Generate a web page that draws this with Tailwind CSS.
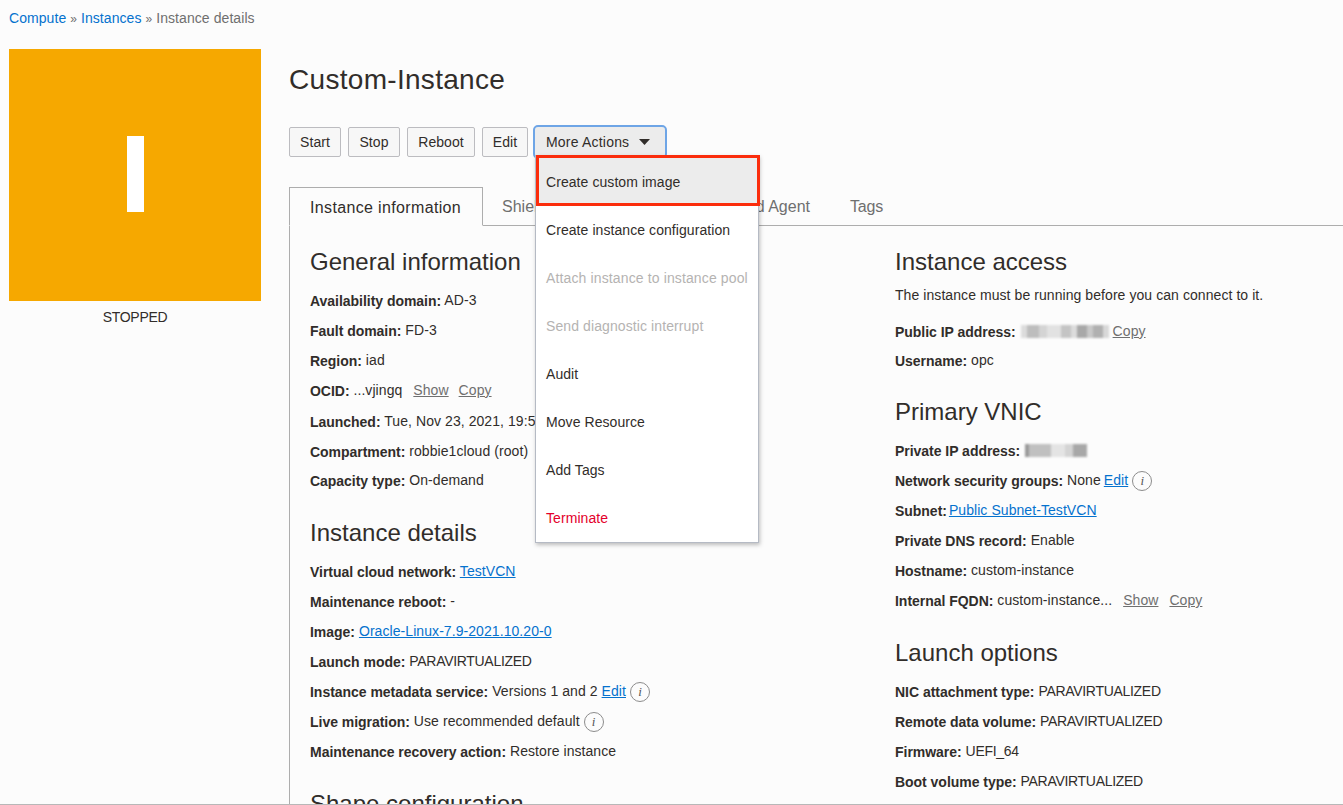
<!DOCTYPE html>
<html lang="en">
  <head>
    <meta charset="UTF-8" />
    <meta name="viewport" content="width=device-width, initial-scale=1.0" />
    <title>Instance details</title>
    <script src="https://cdn.jsdelivr.net/npm/@tailwindcss/browser@4"></script>
  </head>
  <body class="m-0 p-0 bg-[#fcfcfc] font-['Liberation_Sans',Arial,sans-serif] text-[14px] tracking-[0.07px] text-[#312d2a] [&_b]:tracking-[-0.03px] [&_b]:relative [&_b]:top-[1px]">
    <div class="h-[805px] overflow-hidden border-b border-[#b8b8b8] relative">
      <!-- breadcrumb -->
      <div class="h-[49px] pl-[9px] pt-[10px] leading-[16px] text-[#6f6f6f]">
        <a class="text-[#0572ce]">Compute</a> <span class="text-[12px]">»</span>
        <a class="text-[#0572ce]">Instances</a> <span class="text-[12px]">»</span>
        Instance details
      </div>

      <div class="flex pl-[9px]">
        <!-- status tile -->
        <div class="w-[252px] shrink-0">
          <div class="h-[252px] bg-[#f6a800] flex items-center justify-center">
            <div class="w-[17px] h-[76px] bg-white -mt-[2px]"></div>
          </div>
          <div class="text-center mt-[8px] leading-[16px] tracking-[-0.3px]">STOPPED</div>
        </div>

        <div class="ml-[28px] flex-1 min-w-0">
          <h1 class="text-[28px] tracking-[0.3px] leading-[30px] mt-[16px] h-[62px] text-[#312d2a]">Custom-Instance</h1>

          <!-- action buttons -->
          <div class="flex gap-[7px] h-[30px] relative">
            <button class="h-[30px] w-[52px] border border-[#bcbcc0] rounded-[2px] bg-[#f7f7f7]">Start</button>
            <button class="h-[30px] w-[52px] border border-[#bcbcc0] rounded-[2px] bg-[#f7f7f7]">Stop</button>
            <button class="h-[30px] w-[68px] border border-[#bcbcc0] rounded-[2px] bg-[#f7f7f7]">Reboot</button>
            <button class="h-[30px] w-[46px] border border-[#bcbcc0] rounded-[2px] bg-[#f7f7f7]">Edit</button>
            <button class="h-[30px] w-[130px] pl-[11px] flex items-center gap-[10px] rounded-[3px] bg-[#ececec] tracking-[0.2px] outline-2 outline-[#6ea5e6]">
              More Actions
              <svg width="11" height="6" viewBox="0 0 11 6"><path d="M0 0h11L5.500 6z" fill="#312d2a" /></svg>
            </button>

            <!-- dropdown -->
            <div class="absolute left-[246px] top-[28px] w-[224px] z-10 bg-white border border-[#b5bac4] shadow-[1px_2px_4px_rgba(0,0,0,0.25)]">
              <div class="h-[50px] flex items-center pl-[10px] pt-[2px] bg-[#ececec] relative">
                Create custom image
                <div class="absolute -top-[1px] left-0 -right-[2px] h-[51px] border-[3px] border-[#fb2d0c]"></div>
              </div>
              <div class="h-[48px] flex items-center pl-[10px]">Create instance configuration</div>
              <div class="h-[48px] flex items-center pl-[10px] text-[#b5b3b2] tracking-[0.13px]">Attach instance to instance pool</div>
              <div class="h-[48px] flex items-center pl-[10px] text-[#b5b3b2] tracking-[0.1px]">Send diagnostic interrupt</div>
              <div class="h-[48px] flex items-center pl-[10px]">Audit</div>
              <div class="h-[48px] flex items-center pl-[10px]">Move Resource</div>
              <div class="h-[48px] flex items-center pl-[10px]">Add Tags</div>
              <div class="h-[48px] flex items-center pl-[10px] text-[#e4002b]">Terminate</div>
            </div>
          </div>

          <!-- tabs -->
          <div class="flex mt-[30px] h-[39px] border-b border-[#adadad] text-[16px] tracking-normal text-[#6f6f6f]">
            <div class="w-[194px] h-[39px] pl-[20px] pt-[8px] border border-b-[#fcfcfc] border-[#adadad] text-[#312d2a] bg-[#fcfcfc] tracking-[0.35px]">Instance information</div>
            <div class="pl-[19px] pt-[8px]">Shielded Instance</div>
            <div class="ml-auto flex mr-[460px]">
              <div class="pt-[8px] whitespace-nowrap">Oracle Cloud Agent</div>
              <div class="pl-[40px] pt-[8px] tracking-[-0.2px]">Tags</div>
            </div>
          </div>

          <!-- panel -->
          <div class="border-l border-[#adadad] pl-[20px] grid grid-cols-[585px_1fr] h-[600px]">
            <div>
              <h2 class="text-[24px] tracking-normal leading-[28px] mt-[22px] mb-[10px]">General information</h2>
              <div class="h-[30px] leading-[28px]"><b>Availability domain:</b> AD-3</div>
              <div class="h-[30px] leading-[28px]"><b>Fault domain:</b> FD-3</div>
              <div class="h-[30px] leading-[28px]"><b>Region:</b> iad</div>
              <div class="h-[30px] leading-[28px]"><b>OCID:</b> ...vjingq <a class="underline text-[#6f6f6f] ml-[7px]">Show</a> <a class="underline text-[#6f6f6f] ml-[6px]">Copy</a></div>
              <div class="h-[30px] leading-[30px]"><b>Launched:</b> Tue, Nov 23, 2021, 19:53:21 UTC</div>
              <div class="h-[30px] leading-[30px]"><b>Compartment:</b> robbie1cloud (root)</div>
              <div class="h-[30px] leading-[28px]"><b>Capacity type:</b> On-demand</div>

              <h2 class="text-[24px] tracking-normal leading-[28px] mt-[23px] mb-[10px]">Instance details</h2>
              <div class="h-[30px] leading-[28px]"><b>Virtual cloud network:</b> <a class="underline text-[#0572ce]">TestVCN</a></div>
              <div class="h-[30px] leading-[28px]"><b>Maintenance reboot:</b> -</div>
              <div class="h-[30px] leading-[28px]"><b>Image:</b> <a class="underline text-[#0572ce]">Oracle-Linux-7.9-2021.10.20-0</a></div>
              <div class="h-[30px] leading-[28px]"><b>Launch mode:</b> <span class="tracking-[-0.3px]">PARAVIRTUALIZED</span></div>
              <div class="h-[30px] flex items-center gap-[4px]"><span class="-mt-[2px]"><b>Instance metadata service:</b> Versions 1 and 2</span> <a class="underline text-[#0572ce] -mt-[2px]">Edit</a>
                <span class="size-[20px] rounded-full border border-[#8c8c8c] flex items-center justify-center font-['Liberation_Serif',serif] italic text-[13px] text-[#555]">i</span>
              </div>
              <div class="h-[30px] flex items-center gap-[4px]"><span class="-mt-[2px]"><b>Live migration:</b> Use recommended default</span>
                <span class="size-[20px] rounded-full border border-[#8c8c8c] flex items-center justify-center font-['Liberation_Serif',serif] italic text-[13px] text-[#555]">i</span>
              </div>
              <div class="h-[30px] leading-[28px]"><b>Maintenance recovery action:</b> Restore instance</div>

              <h2 class="text-[24px] tracking-normal leading-[28px] mt-[23px]">Shape configuration</h2>
            </div>

            <div>
              <h2 class="text-[24px] tracking-normal leading-[28px] mt-[22px] mb-[11px]">Instance access</h2>
              <div class="leading-[16px] h-[29px]">The instance must be running before you can connect to it.</div>
              <div class="h-[30px] flex items-center"><b>Public IP address:</b>
                <span class="ml-[5px] flex h-[13px] w-[88px] blur-[1px] overflow-hidden">
                  <span class="w-[6px] bg-[#dcdcdc]"></span><span class="w-[12px] bg-[#bdbdbd]"></span><span class="w-[8px] bg-[#d4d4d4]"></span><span class="w-[14px] bg-[#e2e2e2]"></span><span class="w-[10px] bg-[#c4c4c4]"></span><span class="w-[6px] bg-[#dcdcdc]"></span><span class="w-[10px] bg-[#a8a8a8]"></span><span class="w-[6px] bg-[#c8c8c8]"></span><span class="w-[10px] bg-[#b0b0b0]"></span><span class="w-[6px] bg-[#d8d8d8]"></span>
                </span>
                <a class="ml-[4px] underline text-[#6f6f6f]">Copy</a>
              </div>
              <div class="h-[30px] leading-[28px]"><b>Username:</b> opc</div>

              <h2 class="text-[24px] tracking-normal leading-[28px] mt-[22px] mb-[9px]">Primary VNIC</h2>
              <div class="h-[31px] flex items-center"><b>Private IP address:</b>
                <span class="ml-[5px] flex h-[13px] w-[66px] blur-[1px] overflow-hidden">
                  <span class="w-[4px] bg-[#999]"></span><span class="w-[22px] bg-[#c0c0c0]"></span><span class="w-[14px] bg-[#e4e4e4]"></span><span class="w-[8px] bg-[#d4d4d4]"></span><span class="w-[14px] bg-[#a8a8a8]"></span>
                </span>
              </div>
              <div class="h-[30px] flex items-center gap-[3px]"><span class="-mt-[2px]"><b>Network security groups:</b> None</span> <a class="underline text-[#0572ce] -mt-[2px]">Edit</a>
                <span class="ml-[1px] size-[20px] rounded-full border border-[#8c8c8c] flex items-center justify-center font-['Liberation_Serif',serif] italic text-[13px] text-[#555]">i</span>
              </div>
              <div class="h-[30px] leading-[29px]"><b>Subnet:</b> <a class="underline text-[#0572ce] -ml-[2px]">Public Subnet-TestVCN</a></div>
              <div class="h-[30px] leading-[29px]"><b>Private DNS record:</b> Enable</div>
              <div class="h-[30px] leading-[29px]"><b>Hostname:</b> custom-instance</div>
              <div class="h-[30px] leading-[28px]"><b>Internal FQDN:</b> custom-instance... <a class="underline text-[#6f6f6f] ml-[7px]">Show</a> <a class="underline text-[#6f6f6f] ml-[7px]">Copy</a></div>

              <h2 class="text-[24px] tracking-normal leading-[28px] mt-[23px] mb-[10px]">Launch options</h2>
              <div class="h-[30px] leading-[28px]"><b>NIC attachment type:</b> <span class="tracking-[-0.3px]">PARAVIRTUALIZED</span></div>
              <div class="h-[30px] leading-[28px]"><b>Remote data volume:</b> <span class="tracking-[-0.3px]">PARAVIRTUALIZED</span></div>
              <div class="h-[30px] leading-[28px]"><b>Firmware:</b> <span class="tracking-[-0.3px]">UEFI_64</span></div>
              <div class="h-[30px] leading-[28px]"><b>Boot volume type:</b> <span class="tracking-[-0.3px]">PARAVIRTUALIZED</span></div>
            </div>
          </div>
        </div>
      </div>
    </div>
  </body>
</html>
